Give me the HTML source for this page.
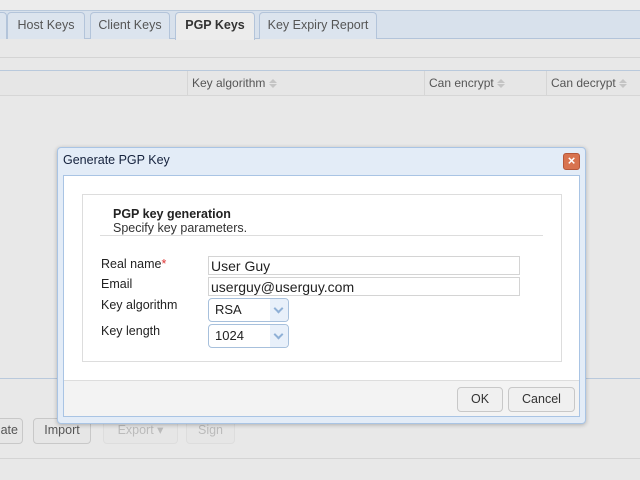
<!DOCTYPE html>
<html><head><style>
*{box-sizing:border-box;margin:0;padding:0}
body{width:640px;height:480px;background:#e8e8e8;font-family:"Liberation Sans",sans-serif;font-size:12px;color:#333;position:relative;overflow:hidden}
.a{position:absolute}
.tab{position:absolute;top:12px;height:27px;border:1px solid #b3c4da;border-bottom:none;border-radius:4px 4px 0 0;background:#dce4ee;color:#555;font-size:12.5px;line-height:25px;text-align:center}
.btn{position:absolute;border:1px solid #c8c8c8;border-radius:4px;background:#e6e6e6;font-size:12.5px;text-align:center;line-height:23px;color:#555}
.in{position:absolute;left:208px;width:312px;height:19px;border:1px solid #d4d4d4;background:#fff;font-size:14px;color:#222;padding-left:2px;line-height:18px}
.sel{position:absolute;left:208px;width:81px;height:24px;border:1px solid #a7c0dc;border-radius:4px;background:#fff;font-size:13px;color:#222;padding-left:6px;line-height:22px}
.sel i{position:absolute;right:0;top:0;width:18px;height:22px;background:#e8f0fa;border-radius:0 4px 4px 0}
.sel i:after{content:"";position:absolute;left:5px;top:6px;width:5px;height:5px;border-right:2px solid #8fb0d6;border-bottom:2px solid #8fb0d6;transform:rotate(45deg)}
.lb{position:absolute;left:101px;font-size:12.5px;color:#222}
.s{display:inline-block;vertical-align:middle;width:8px;height:10px;position:relative}
.s:before{content:"";position:absolute;left:0;top:0;border:4px solid transparent;border-top:none;border-bottom:4px solid #c4c4c4}
.s:after{content:"";position:absolute;left:0;top:5px;border:4px solid transparent;border-bottom:none;border-top:4px solid #c4c4c4}
</style></head><body>
<div class="a" style="left:0;top:0;width:640px;height:10px;background:#ececec"></div>
<div class="a" style="left:0;top:10px;width:640px;height:29px;background:#d8e1ec;border-top:1px solid #b9c9dc;border-bottom:1px solid #b3c4da"></div>
<div class="tab" style="left:-5px;width:12px"></div>
<div class="tab" style="left:7px;width:78px">Host Keys</div>
<div class="tab" style="left:90px;width:80px">Client Keys</div>
<div class="tab" style="left:175px;width:80px;height:28px;background:#ececec;color:#333;font-weight:bold">PGP Keys</div>
<div class="tab" style="left:259px;width:118px">Key Expiry Report</div>
<div class="a" style="left:0;top:57px;width:640px;height:1px;background:#d4d4d4"></div>
<div class="a" style="left:0;top:70px;width:640px;height:26px;background:#e6e6e6;border-top:1px solid #b9c9dc;border-bottom:1px solid #d6d6d6"></div>
<div class="a" style="left:187px;top:71px;width:1px;height:24px;background:#d6d6d6"></div>
<div class="a" style="left:424px;top:71px;width:1px;height:24px;background:#d6d6d6"></div>
<div class="a" style="left:546px;top:71px;width:1px;height:24px;background:#d6d6d6"></div>
<div class="a" style="left:192px;top:76px;color:#555">Key algorithm <span class="s"></span></div>
<div class="a" style="left:429px;top:76px;color:#555">Can encrypt <span class="s"></span></div>
<div class="a" style="left:551px;top:76px;color:#555">Can decrypt <span class="s"></span></div>
<div class="a" style="left:0;top:378px;width:640px;height:1px;background:#b9c9dc"></div>
<div class="a" style="left:0;top:458px;width:640px;height:1px;background:#d4d4d4"></div>
<div class="btn" style="left:-10px;top:418px;width:33px;height:26px;text-align:right;padding-right:4px">ate</div>
<div class="btn" style="left:33px;top:418px;width:58px;height:26px">Import</div>
<div class="btn" style="left:103px;top:418px;width:75px;height:26px;color:#bbb;border-color:#ddd">Export &#9662;</div>
<div class="btn" style="left:186px;top:418px;width:49px;height:26px;color:#bbb;border-color:#ddd">Sign</div>
<div class="a" style="left:57px;top:147px;width:529px;height:277px;background:#e3ecf7;border:1px solid #a9c4e4;border-radius:4px;box-shadow:0 1px 4px rgba(0,0,0,.25)"></div>
<div class="a" style="left:63px;top:153px;font-size:12.5px;color:#15223d">Generate PGP Key</div>
<div class="a" style="left:563px;top:153px;width:17px;height:17px;background:#d8734f;border:1px solid #b5573a;border-radius:3px;color:#fff;font-weight:bold;font-size:13px;line-height:14px;text-align:center">×</div>
<div class="a" style="left:63px;top:175px;width:517px;height:242px;background:#fff;border:1px solid #a9c4e4"></div>
<div class="a" style="left:64px;top:380px;width:515px;height:36px;background:#f3f3f3;border-top:1px solid #ddd"></div>
<div class="a" style="left:82px;top:194px;width:480px;height:168px;border:1px solid #ddd"></div>
<div class="a" style="left:113px;top:207px;font-size:12.5px;font-weight:bold;color:#222">PGP key generation</div>
<div class="a" style="left:113px;top:221px;font-size:12.5px;color:#333">Specify key parameters.</div>
<div class="a" style="left:100px;top:235px;width:443px;height:1px;background:#ddd"></div>
<div class="lb" style="top:257px">Real name<span style="color:#d33">*</span></div>
<div class="lb" style="top:277px">Email</div>
<div class="lb" style="top:298px">Key algorithm</div>
<div class="lb" style="top:324px">Key length</div>
<div class="in" style="top:256px">User Guy</div>
<div class="in" style="top:277px">userguy@userguy.com</div>
<div class="sel" style="top:298px">RSA<i></i></div>
<div class="sel" style="top:324px">1024<i></i></div>
<div class="btn" style="left:457px;top:387px;width:46px;height:25px;background:#f0f0f0;color:#333">OK</div>
<div class="btn" style="left:508px;top:387px;width:67px;height:25px;background:#f0f0f0;color:#333">Cancel</div>
</body></html>
